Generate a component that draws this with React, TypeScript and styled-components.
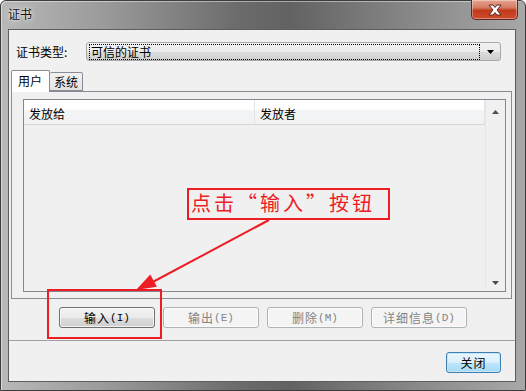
import React from "react";
import styled, { createGlobalStyle } from "styled-components";

const GlobalStyle = createGlobalStyle`
  html, body {
    margin: 0;
    padding: 0;
    background: #ffffff;
  }
  body {
    font-family: "Noto Sans CJK SC", "Liberation Sans", sans-serif;
    font-size: 12px;
  }
`;

const Window = styled.div`
  position: relative;
  box-sizing: border-box;
  width: 526px;
  height: 391px;
  display: flex;
  flex-direction: column;
  padding: 0 9px 8px 7px;
  border: 1px solid #3c3c3c;
  border-radius: 6px 6px 0 0;
  background: linear-gradient(
    90deg,
    #b8b8b8 0%,
    #9a9a9a 20%,
    #6c6c6c 45%,
    #626262 55%,
    #8a8a8a 80%,
    #a8a8a8 100%
  );
  box-shadow: inset 1px 1px 0 rgba(255, 255, 255, 0.45);
`;

const TitleBar = styled.div`
  height: 28px;
  display: flex;
  align-items: flex-start;
  justify-content: space-between;
`;

const Title = styled.span`
  margin: 5px 0 0 0;
  color: #111;
  font-size: 12px;
  line-height: 16px;
  text-shadow: 0 0 6px rgba(255, 255, 255, 0.9), 0 0 2px rgba(255, 255, 255, 0.9);
`;

const CloseButton = styled.div`
  box-sizing: border-box;
  width: 47px;
  height: 20px;
  margin-top: -1px;
  margin-right: -2px;
  border: 1px solid #5a2a22;
  border-top: none;
  border-radius: 0 0 5px 5px;
  background: linear-gradient(180deg, #e8a493 0%, #d47a62 40%, #c1391b 55%, #d04c2c 100%);
  box-shadow: inset 0 0 0 1px rgba(255, 255, 255, 0.35);
  display: flex;
  align-items: center;
  justify-content: center;
`;

const Client = styled.div`
  position: relative;
  flex: 1;
  display: flex;
  flex-direction: column;
  border: 1px solid #5d5d5d;
  background: #f0f0f0;
`;

const TypeRow = styled.div`
  display: flex;
  align-items: center;
  margin-top: 12px;
  padding-left: 7px;
  height: 19px;
`;

const Label = styled.span`
  width: 70px;
  color: #000;
  font-size: 12px;
`;

const Combo = styled.div`
  box-sizing: border-box;
  width: 415px;
  height: 19px;
  display: flex;
  align-items: center;
  border: 1px solid #a9a9a9;
  border-radius: 3px;
  background: linear-gradient(180deg, #f2f2f2 0%, #ebebeb 50%, #dddddd 51%, #cfcfcf 100%);
  padding: 0 0 0 2px;
`;

const ComboText = styled.div`
  flex: 1;
  height: 14px;
  line-height: 14px;
  border: 1px dotted #000;
  padding-left: 1px;
  font-size: 12px;
  color: #000;
`;

const ComboArrow = styled.div`
  width: 20px;
  display: flex;
  justify-content: center;
  align-items: center;
`;

const TabStrip = styled.div`
  display: flex;
  align-items: flex-end;
  margin: 8px 0 0 2px;
  height: 22px;
  position: relative;
  z-index: 1;
`;

const Tab = styled.div<{ active?: boolean }>`
  box-sizing: border-box;
  height: ${p => (p.active ? "22px" : "19px")};
  margin-bottom: ${p => (p.active ? "-1px" : "0")};
  padding: ${p => (p.active ? "2px 7px 0 6px" : "1px 4px 0 4px")};
  border: 1px solid #898c95;
  border-bottom: ${p => (p.active ? "none" : "1px solid #898c95")};
  border-left: ${p => (p.active ? "1px solid #898c95" : "none")};
  border-radius: 2px 2px 0 0;
  background: ${p => (p.active ? "#ffffff" : "linear-gradient(180deg, #f2f2f2 0%, #e3e3e3 100%)")};
  font-size: 12px;
  line-height: 16px;
  color: #000;
`;

const Panel = styled.div`
  box-sizing: border-box;
  height: 208px;
  margin: 0 3px 0 2px;
  border: 1px solid #898c95;
  background: #f0f0f0;
  padding: 7px 9px 6px 11px;
  display: flex;
`;

const List = styled.div`
  flex: 1;
  display: flex;
  border: 1px solid #828790;
  background: #f0f0f0;
`;

const ListBody = styled.div`
  flex: 1;
  display: flex;
  flex-direction: column;
`;

const Header = styled.div`
  display: flex;
  height: 24px;
  border-bottom: 1px solid #d5d5d5;
  background: linear-gradient(180deg, #ffffff 0%, #ffffff 40%, #f3f4f6 41%, #f1f2f4 100%);
`;

const HeaderCell = styled.div<{ width: number }>`
  box-sizing: border-box;
  width: ${p => p.width}px;
  padding: 5px 0 0 5px;
  font-size: 12px;
  color: #000;
  border-right: 1px solid #e3e4e6;
`;

const ScrollBar = styled.div`
  width: 19px;
  display: flex;
  flex-direction: column;
  justify-content: space-between;
  align-items: center;
  padding: 10px 0 6px;
  border-left: 1px solid #e6e6e6;
  background: #f0f0f0;
`;

const ButtonRow = styled.div`
  display: flex;
  gap: 8px;
  margin-top: 8px;
  padding-left: 50px;
`;

const Button = styled.div<{ disabled?: boolean }>`
  box-sizing: border-box;
  width: 96px;
  height: 21px;
  display: flex;
  align-items: center;
  justify-content: center;
  border: 1px solid ${p => (p.disabled ? "#adb2b5" : "#707070")};
  border-radius: 3px;
  background: ${p =>
    p.disabled
      ? "#f4f4f4"
      : "linear-gradient(180deg, #f2f2f2 0%, #ebebeb 50%, #dddddd 51%, #cfcfcf 100%)"};
  box-shadow: inset 0 0 0 1px rgba(255, 255, 255, 0.7);
  color: ${p => (p.disabled ? "#838383" : "#000")};
  font-size: 12px;
  letter-spacing: 1px;
`;

const Key = styled.span`
  font-family: "Liberation Mono", monospace;
  font-size: 11px;
  letter-spacing: 0;
`;

const Separator = styled.div`
  margin-top: 12px;
  height: 1px;
  background: #a0a0a0;
`;

const Footer = styled.div`
  display: flex;
  justify-content: flex-end;
  margin-top: 11px;
  padding-right: 14px;
`;

const DefaultButton = styled.div`
  box-sizing: border-box;
  width: 55px;
  height: 21px;
  display: flex;
  align-items: center;
  justify-content: center;
  border: 1px solid #3c7fb1;
  border-radius: 3px;
  background: linear-gradient(180deg, #eaf6fd 0%, #d9f0fc 50%, #bee6fd 51%, #a7d9f5 100%);
  box-shadow: inset 0 0 0 1px #c6e6f8;
  font-size: 12px;
  color: #000;
  letter-spacing: 1px;
`;

const Callout = styled.div`
  position: absolute;
  left: 178px;
  top: 158px;
  box-sizing: border-box;
  width: 203px;
  height: 32px;
  border: 2px solid #ee1c25;
  background: #f0f0f0;
  color: #ee1c25;
  font-size: 20px;
  line-height: 26px;
  padding-left: 2px;
  letter-spacing: 3px;
  white-space: nowrap;
`;

const Highlight = styled.div`
  position: absolute;
  left: 38px;
  top: 259px;
  box-sizing: border-box;
  width: 115px;
  height: 50px;
  border: 2px solid #ee1c25;
`;

const ArrowLayer = styled.svg`
  position: absolute;
  left: 0;
  top: 0;
  pointer-events: none;
`;

const App: React.FC = () => {
  return (
    <>
      <GlobalStyle />
      <Window>
        <TitleBar>
          <Title>证书</Title>
          <CloseButton>
            <svg width="16" height="12" viewBox="0 0 16 12">
              <path
                d="M2 1 L6 1 L8 3.5 L10 1 L14 1 L10 6 L14 11 L10 11 L8 8.5 L6 11 L2 11 L6 6 Z"
                fill="#ffffff"
                stroke="#5a2a22"
                strokeWidth="1"
              />
            </svg>
          </CloseButton>
        </TitleBar>
        <Client>
          <TypeRow>
            <Label>证书类型:</Label>
            <Combo>
              <ComboText>可信的证书</ComboText>
              <ComboArrow>
                <svg width="7" height="4" viewBox="0 0 7 4">
                  <path d="M0 0 H7 L3.5 4 Z" fill="#000" />
                </svg>
              </ComboArrow>
            </Combo>
          </TypeRow>
          <TabStrip>
            <Tab active>用户</Tab>
            <Tab>系统</Tab>
          </TabStrip>
          <Panel>
            <List>
              <ListBody>
                <Header>
                  <HeaderCell width={231}>发放给</HeaderCell>
                  <HeaderCell width={230}>发放者</HeaderCell>
                </Header>
              </ListBody>
              <ScrollBar>
                <svg width="7" height="4" viewBox="0 0 7 4">
                  <path d="M0 4 H7 L3.5 0 Z" fill="#4d4d4d" />
                </svg>
                <svg width="7" height="4" viewBox="0 0 7 4">
                  <path d="M0 0 H7 L3.5 4 Z" fill="#4d4d4d" />
                </svg>
              </ScrollBar>
            </List>
          </Panel>
          <ButtonRow>
            <Button>
              输入<Key>(I)</Key>
            </Button>
            <Button disabled>
              输出<Key>(E)</Key>
            </Button>
            <Button disabled>
              删除<Key>(M)</Key>
            </Button>
            <Button disabled>
              详细信息<Key>(D)</Key>
            </Button>
          </ButtonRow>
          <Separator />
          <Footer>
            <DefaultButton>关闭</DefaultButton>
          </Footer>
          <Callout>点击“输入”按钮</Callout>
          <Highlight />
          <ArrowLayer width="510" height="354" viewBox="0 0 510 354">
            <line x1="260" y1="190" x2="140" y2="254" stroke="#ee1c25" strokeWidth="2" />
            <path d="M127 260 L147.9 256.8 L141.3 244.4 Z" fill="#ee1c25" />
          </ArrowLayer>
        </Client>
      </Window>
    </>
  );
};

export default App;
